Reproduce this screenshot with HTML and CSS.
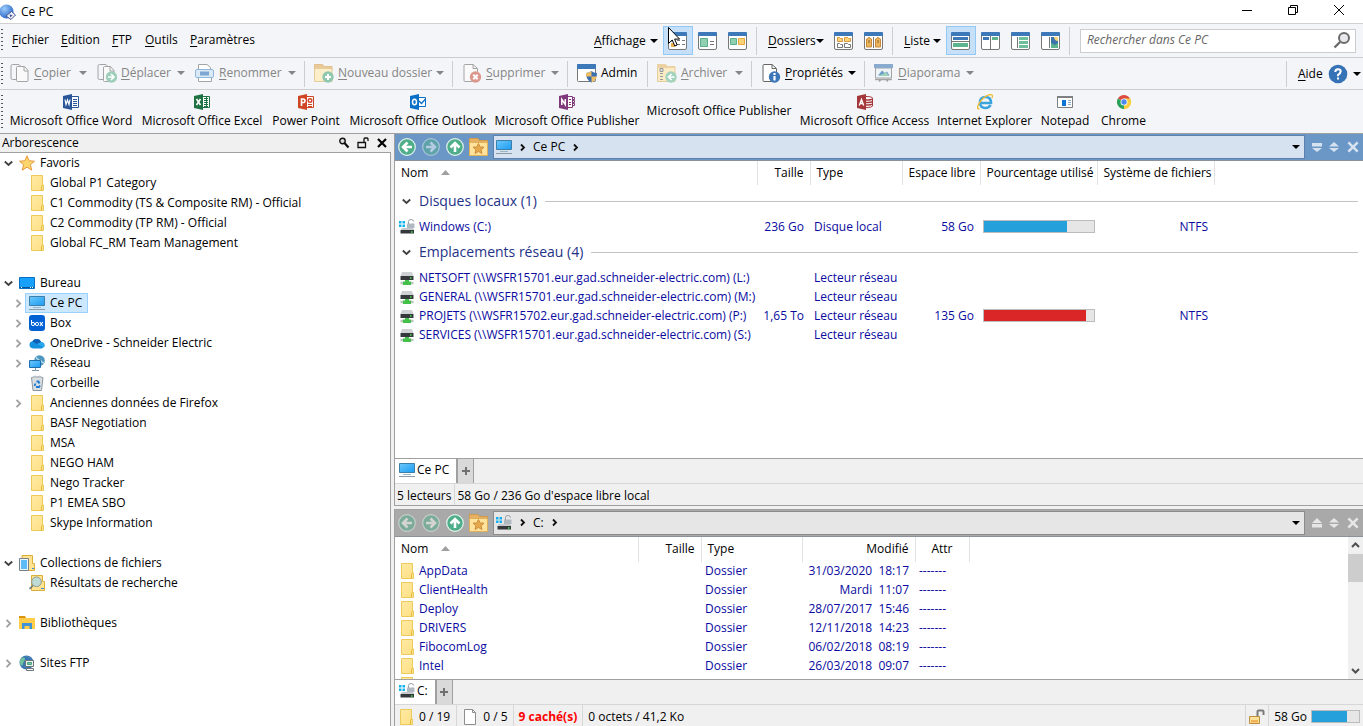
FILE: index.html
```html
<!DOCTYPE html>
<html lang="fr">

<head>
  <meta charset="UTF-8">
  <meta name="viewport" content="width=device-width, initial-scale=1.0">
  <link rel="stylesheet" href="styles.css">
  <title>Ce PC</title>
</head>

<body>
  <svg class="sprite" aria-hidden="true">
    <defs>
      <linearGradient id="g-folder" x1="0" y1="0" x2="1" y2="1"><stop offset="0" stop-color="#ffeaa5"/><stop offset="1" stop-color="#ffdf82"/></linearGradient>
      <linearGradient id="g-screen" x1="0" y1="0" x2="1" y2="1"><stop offset="0" stop-color="#6cc8fb"/><stop offset="1" stop-color="#1c9cf2"/></linearGradient>
      <radialGradient id="g-ball" cx=".35" cy=".3" r=".8"><stop offset="0" stop-color="#9ccbfa"/><stop offset="1" stop-color="#1f5fc4"/></radialGradient>
    </defs>

    <!-- 16px icons -->
    <symbol id="app" viewBox="0 0 16 16"><circle cx="6.500" cy="7.500" r="7" fill="url(#g-ball)"/><path d="M11.500 7.500L15.500 11l-4.500 4.500L6 12z" fill="#eef0fa" stroke="#44548f"/><path d="M9.500 10.500l3 .5-2 2.500z" fill="#3b4c8c"/></symbol>
    <symbol id="folder" viewBox="0 0 16 16"><path d="M2.500.5h11v9.500h1v5.500h-12z" fill="url(#g-folder)" stroke="#eccb5c"/><path d="M12.500 15.500v-4l1-1.500" fill="none" stroke="#e3b93c"/></symbol>
    <symbol id="star" viewBox="0 0 16 16"><path d="M8 .8l2.200 5 5.300.4-4.100 3.500 1.400 5.500L8 12.200l-4.800 3 1.400-5.500L.5 6.200l5.300-.4z" fill="#fdd56f" stroke="#e59a3e"/></symbol>
    <symbol id="desktop" viewBox="0 0 16 16"><path d="M.5 2.500h15v11H.5z" fill="#18a0fb" stroke="#0a6fc2"/><path d="M1 12.500h14" stroke="#08539a"/><path d="M2 12.500h1m8 0h1m1 0h1" stroke="#fff"/></symbol>
    <symbol id="pc" viewBox="0 0 16 16"><path d="M.5 1.500h15v9H.5z" fill="url(#g-screen)" stroke="#3c7fa9"/><path d="M4 12.500h8" stroke="#9bb4c2"/><path d="M0 14.500h16" stroke="#8b9aa3"/></symbol>
    <symbol id="box" viewBox="0 0 16 16"><rect width="16" height="16" rx="3" fill="#0061d5"/><path d="M2.500 5v4.500" stroke="#fff" fill="none"/><circle cx="4" cy="9" r="1.600" fill="none" stroke="#fff"/><circle cx="8" cy="9" r="1.600" fill="none" stroke="#fff"/><path d="M10.800 7l3 4m0-4l-3 4" stroke="#fff" stroke-width="1.200"/></symbol>
    <symbol id="cloud" viewBox="0 0 16 16"><path d="M4 13.500a3.700 3.700 0 0 1-.6-7.300 5 5 0 0 1 8.800.7 3.400 3.400 0 0 1 .6 6.600z" fill="#1490df"/><path d="M3.400 6.200a5 5 0 0 1 8.800.7L8 9z" fill="#0f5fb5"/><path d="M12.200 6.900a3.400 3.400 0 0 1 2.800 5.500L8 9z" fill="#28a8ea"/></symbol>
    <symbol id="network" viewBox="0 0 16 16"><circle cx="10.500" cy="5.500" r="5.300" fill="#4d96bd"/><path d="M7 2.500c2 .8 1.500 3 4 3s1 3 4 2" stroke="#b7dcea" fill="none" stroke-width="1.500"/><path d="M.5 5.500h11v7H.5z" fill="url(#g-screen)" stroke="#1f6fae"/><path d="M3 15.500h7M6.500 13v2" stroke="#7c99aa"/></symbol>
    <symbol id="bin" viewBox="0 0 16 16"><path d="M2.500 2.500h11.500l-1.500 13H4z" fill="#d9dee2" stroke="#8d979e"/><path d="M3 2.500l3-1.500 2 1 3-1 2 1.500" fill="#f7f8f9" stroke="#aab3b9"/><path d="M5.500 11l1-2.500M7.500 6.500h2l1 2M11 10.500l-1 1.500H7" stroke="#1c7ad2" stroke-width="1.800" fill="none"/></symbol>
    <symbol id="collection" viewBox="0 0 16 16"><path d="M3 .5h10.500v8h2v7H3z" fill="#ffe391" stroke="#dcae3c"/><path d="M.5 3.500h9v12h-9z" fill="#eef7fd" stroke="#75818a"/><path d="M2 5h6v9H2z" fill="#5fbbf5"/><path d="M13 13.500h2" stroke="#3a8bd8"/></symbol>
    <symbol id="results" viewBox="0 0 16 16"><path d="M2.500.5h11v6h2v9h-13z" fill="#ffe391" stroke="#dcae3c"/><circle cx="7.500" cy="6.800" r="4.800" fill="#bfdbd6" stroke="#8b9a96"/><path d="M4 10.500L.5 14" stroke="#6f7a80" stroke-width="1.600"/><path d="M12 13.500h3" stroke="#3a8bd8"/></symbol>
    <symbol id="library" viewBox="0 0 16 16"><path d="M0 1h6l1 2H0z" fill="#d9930d"/><path d="M0 3h16v11H0z" fill="#ffcd4a"/><path d="M3 14V8h10v6h-2.500v-3h-5v3z" fill="#3d93d8"/></symbol>
    <symbol id="ftp" viewBox="0 0 16 16"><circle cx="7.500" cy="7.500" r="7" fill="#3a77b5"/><path d="M1 5c2-3 5-3 5-1S4 7 4 9s-1 2-3 0M7 1c1 2 4 0 4 2" fill="#6fc09b"/><path d="M6.500 5.500h8v6h-8z" fill="#e8f3ee" stroke="#6e7477"/><path d="M8.500 7.500h4v2h-4z" fill="#7bc8a4" stroke="#4ea37e"/><path d="M7.500 13.500h7v2h-7z" fill="#fff" stroke="#6e7477"/></symbol>
    <symbol id="drive" viewBox="0 0 16 16"><path d="M0 2h2.500v2.500H0zM3.500 2H6v2.500H3.500zM0 5.500h2.500V8H0zM3.500 5.500H6V8H3.500z" fill="#13b1f0"/><path d="M3 9h11l1.500 2H1.500z" fill="#c6c9cb"/><path d="M1.500 11h13.500v3.500H1.500z" fill="#35393b"/><path d="M12 13h1.500" stroke="#47e04e" stroke-width="1.500"/><path d="M8 4.500h7.500V9H8z" fill="#b0b8c0"/><path d="M9.500 5V2.500q0-2 2.500-2t2.500 2" stroke="#98a1a9" fill="none"/></symbol>
    <symbol id="netdrive" viewBox="0 0 16 16"><path d="M3 2h10l1.500 4h-13z" fill="#cfd2d4"/><path d="M1.500 6h13v4h-13z" fill="#35393b"/><path d="M11 8h1.500" stroke="#47e04e" stroke-width="1.500"/><path d="M6 10h4v1.500h2V15H4v-3.500h2z" fill="#43c04a"/><path d="M1.500 13h2.500m8 0h2.500" stroke="#b9c4ba" stroke-width="2.500"/></symbol>
    <symbol id="doc" viewBox="0 0 16 16"><path d="M2.500.5h8l3 3v12h-11z" fill="#fff" stroke="#8e8e8e"/><path d="M10.500.5v3h3" fill="none" stroke="#8e8e8e"/></symbol>
    <symbol id="unlock" viewBox="0 0 16 16"><path d="M.5 7.500h10v7H.5z" fill="#ffe19a" stroke="#bf8e3e"/><path d="M2 11h7v2.500H2z" fill="#f0b254"/><path d="M8.500 7V2.500q0-1 1-1h4q1 0 1 1V6" fill="none" stroke="#7b7b7b" stroke-width="2"/></symbol>
    <symbol id="chev-down" viewBox="0 0 9 9"><path d="M.8 2.500L4.500 6l3.700-3.500" fill="none" stroke="#404040" stroke-width="1.800"/></symbol>
    <symbol id="chev-right" viewBox="0 0 9 9"><path d="M2.500.8L6.200 4.500 2.500 8.200" fill="none" stroke="#a0a0a0" stroke-width="1.800"/></symbol>
    <symbol id="crumb" viewBox="0 0 9 9"><path d="M3 1.500l3 3-3 3" fill="none" stroke="#111" stroke-width="1.800"/></symbol>
    <symbol id="caret" viewBox="0 0 8 4"><path d="M0 0h8L4 4z" fill="currentColor"/></symbol>
    <symbol id="sort" viewBox="0 0 9 5"><path d="M0 5h9L4.500 0z" fill="#a0a0a0"/></symbol>
    <symbol id="find" viewBox="0 0 12 12"><circle cx="4.500" cy="4" r="2.700" fill="#ddd" stroke="#111" stroke-width="1.400"/><path d="M6.500 6l4 4.500" stroke="#111" stroke-width="2.200"/></symbol>
    <symbol id="lock" viewBox="0 0 12 12"><path d="M1 5.500h7.500v5H1z" fill="none" stroke="#111" stroke-width="1.300"/><path d="M7 5V2q0-1 1-1h2q1 0 1 1v2" fill="none" stroke="#111" stroke-width="1.300"/></symbol>
    <symbol id="cross" viewBox="0 0 12 12"><path d="M2 2l8 8M10 2l-8 8" stroke="currentColor" stroke-width="2.200"/></symbol>

    <!-- 20px toolbar icons -->
    <symbol id="copy" viewBox="0 0 20 20"><path d="M6.500 16.500h-4q-1.500 0-1.500-1.500V3q0-1.500 1.500-1.500H9L11.500 4" fill="#f4f5f8" stroke="#a4a4a4"/><path d="M7.500 3.500h7l3.500 4v10q0 1-1 1H7.500q-1 0-1-1v-13q0-1 1-1z" fill="#fafafa" stroke="#a4a4a4"/><path d="M14 3.500V8h4" fill="none" stroke="#a4a4a4"/></symbol>
    <symbol id="move" viewBox="0 0 20 20"><path d="M6.500 16.500h-4Q1 16.500 1 15V3q0-1.500 1.500-1.500H9L11.500 4" fill="#f4f5f8" stroke="#a4a4a4"/><path d="M7.500 3.500h6l3.500 4v11H7.500q-1 0-1-1v-13q0-1 1-1z" fill="#fafafa" stroke="#a4a4a4"/><path d="M13 3.500V8h4" fill="none" stroke="#a4a4a4"/><circle cx="14.500" cy="14" r="5.700" fill="#9dceb9"/><path d="M11 14h6m-3-3l3 3-3 3" fill="none" stroke="#fff" stroke-width="1.700"/></symbol>
    <symbol id="rename" viewBox="0 0 20 20"><path d="M3.500 7V1.500H12L15.500 4.500V7" fill="#fff" stroke="#a4a4a4"/><path d="M3.500 13v5.500h13V13" fill="#fff" stroke="#a4a4a4"/><rect x=".5" y="6.500" width="18" height="8" rx="1.500" fill="#dbe9f5" stroke="#8db7de"/><path d="M5 8.500h9v4H5z" fill="#7ea6d0"/></symbol>
    <symbol id="newfolder" viewBox="0 0 20 20"><path d="M.5 1.500h8l1.500 2h8v4H.5z" fill="#ecc999" stroke="#dfc08f"/><path d="M.5 5.500h17.500v13H.5z" fill="#fbeec9" stroke="#e5cd9b"/><circle cx="14" cy="14" r="5.700" fill="#8fc8ae"/><path d="M11 14h6M14 11v6" stroke="#fff" stroke-width="2"/></symbol>
    <symbol id="delete" viewBox="0 0 20 20"><path d="M3 1.500h8l4.500 4v13H3q-1 0-1-1v-15q0-1 1-1z" fill="#fafafa" stroke="#a4a4a4"/><path d="M11 1.500v4h4" fill="none" stroke="#a4a4a4"/><circle cx="13.500" cy="14" r="5.700" fill="#dc978c"/><path d="M11.300 11.800l4.400 4.400m0-4.400l-4.400 4.400" stroke="#fff" stroke-width="2"/></symbol>
    <symbol id="admin" viewBox="0 0 20 20"><path d="M.5 1.500h18v16q0 1-1 1h-16q-1 0-1-1z" fill="#fff" stroke="#777"/><path d="M0 2q0-1 1-1h17q1 0 1 1v4H0z" fill="#3d78b8"/><path d="M9 10q3 0 5.500-2 2 2 5.500 2 0 7-5.500 9.500Q9 17 9 10z" fill="#3a6fb0"/><path d="M14.500 8v5.500H9.200L9 10q3 0 5.500-2zM14.500 13.500h5.200q-.9 4-5.200 6z" fill="#efbe63"/></symbol>
    <symbol id="archive" viewBox="0 0 20 20"><path d="M.5 1.500h8l1.500 2h8v15H.5z" fill="#fbecc6" stroke="#e5cd9b"/><path d="M0 2q0-1 1-1h7l1.500 2H18v2H0z" fill="#ecd2a2"/><path d="M3 5.500h3v3H3zM3 10.500h3m-3 3h3m-3 3h3" fill="#ddd" stroke="#9a9a9a"/><circle cx="14" cy="14" r="5.700" fill="#a3d3bc"/><path d="M17.500 14h-6m3-3l-3 3 3 3" fill="none" stroke="#fff" stroke-width="1.700"/></symbol>
    <symbol id="props" viewBox="0 0 20 20"><path d="M3 1.500h8l4.500 4v13H3q-1 0-1-1v-15q0-1 1-1z" fill="#fff" stroke="#666"/><path d="M11 1.500v4h4" fill="none" stroke="#666"/><circle cx="13.500" cy="14" r="5.700" fill="#3a76b8"/><path d="M13.500 10v2m0 1v4.500" stroke="#fff" stroke-width="2.200"/></symbol>
    <symbol id="slides" viewBox="0 0 20 20"><path d="M1.500 5h16v10h-16z" fill="#eef3f7" stroke="#a4a4a4"/><path d="M0 1h19v4H0z" fill="#8aabd0"/><path d="M4 12.500l4-5 3 2.500 2-1.500 2.500 4z" fill="#6e9ecb"/><path d="M4 13h11l-3-4-3 2z" fill="#9fd0ba"/><path d="M1 16.500h17M5 18.500l2-2m7 2l-2-2" stroke="#a4a4a4" stroke-width="1.500"/></symbol>
    <symbol id="help" viewBox="0 0 20 20"><circle cx="10" cy="10" r="9.300" fill="#3672b6"/><path d="M7.300 8q0-2.700 2.700-2.700t2.700 2.300Q12.700 9 10 11v1.300m0 1.200v2" fill="none" stroke="#fff" stroke-width="2"/></symbol>
    <symbol id="window" viewBox="0 0 20 20"><rect x=".5" y="1.500" width="18" height="17" rx="1.500" fill="#fff" stroke="#777"/><path d="M0 5V2q0-1 1-1h17q1 0 1 1v3z" fill="#3d78b8"/></symbol>
    <symbol id="v-details" viewBox="0 0 20 20"><use href="#window"/><path d="M3 7h4v4H3z" fill="#8fd0b0"/><path d="M3 12h4v4H3z" fill="#eeb04c"/><path d="M9 9.500h3m2 0h3m-8 4h3m2 0h3" stroke="#777"/></symbol>
    <symbol id="v-tiles" viewBox="0 0 20 20"><use href="#window"/><path d="M2.500 7.500h7v8h-7z" fill="#8fd0b0" stroke="#5cae8b"/><path d="M12 10.500h4m-4 3h4" stroke="#777"/></symbol>
    <symbol id="v-thumbs" viewBox="0 0 20 20"><use href="#window"/><path d="M2.500 7.500h6v6h-6z" fill="#8fd0b0" stroke="#5cae8b"/><path d="M10.500 7.500h6v6h-6z" fill="#fbd277" stroke="#e8a83c"/></symbol>
    <symbol id="v-folders" viewBox="0 0 20 20"><use href="#window"/><path d="M3.500 6.500h2l1 1h2v3h-5zM10.500 6.500h3l1 1h2v3h-6z" fill="#fbd277" stroke="#d9983e"/><path d="M3.500 12.500h2l1 1h2v3h-5zM10.500 12.500h3l1 1h2v3h-6z" fill="#fff" stroke="#777"/></symbol>
    <symbol id="v-dual" viewBox="0 0 20 20"><use href="#window"/><path d="M2.500 16V8L5 6.500 7.500 8v8zM11.500 16V8L14 6.500 16.500 8v8z" fill="#e9b45c" stroke="#c88a3a"/><path d="M9.500 6v11" stroke="#777"/><path d="M5 9v3m9-3v3" stroke="#8a6431"/></symbol>
    <symbol id="v-list" viewBox="0 0 20 20"><use href="#window"/><path d="M2 6h15v3H2z" fill="#3d78b8"/><path d="M1 10.500h17" stroke="#777"/><path d="M2 12h15v4H2z" fill="#5cb48f"/></symbol>
    <symbol id="v-cols" viewBox="0 0 20 20"><use href="#window"/><path d="M2 6h6v3H2z" fill="#3d78b8"/><path d="M11 6h6v3h-6z" fill="#5cb48f"/><path d="M9.500 5v13" stroke="#777"/></symbol>
    <symbol id="v-tree" viewBox="0 0 20 20"><use href="#window"/><path d="M6.500 6v11" stroke="#777"/><path d="M8 7.500h9m-9 4h9m-9 4h9" stroke="#6cbf9a" stroke-width="3"/></symbol>
    <symbol id="v-view" viewBox="0 0 20 20"><use href="#window"/><path d="M8.500 6v11" stroke="#777"/><path d="M10 6h7v11h-7z" fill="#3f74aa"/><path d="M10 17v-5l4 2 3-2v5z" fill="#5cb48f"/><path d="M13 6h4v4q-3.500 0-4-4z" fill="#f9d67e"/></symbol>
    <symbol id="search" viewBox="0 0 18 18"><circle cx="11" cy="7" r="5" fill="#e6e8ee" stroke="#6b6b6b" stroke-width="2"/><path d="M7 11l-5.500 5.500" stroke="#6b6b6b" stroke-width="2.400"/></symbol>

    <!-- location bar -->
    <symbol id="back" viewBox="0 0 20 20"><circle cx="10" cy="10" r="8.300" fill="#4fae8a" stroke="#e4f3ec" stroke-width="1.200"/><path d="M15 10H6m4.500-4.500L6 10l4.500 4.500" fill="none" stroke="#fff" stroke-width="2.600"/></symbol>
    <symbol id="forward" viewBox="0 0 20 20"><circle cx="10" cy="10" r="8.300" fill="#4fae8a" stroke="#e4f3ec" stroke-width="1.200"/><path d="M5 10h9M9.500 5.500L14 10l-4.500 4.500" fill="none" stroke="#fff" stroke-width="2.600"/></symbol>
    <symbol id="up" viewBox="0 0 20 20"><circle cx="10" cy="10" r="8.300" fill="#4fae8a" stroke="#e4f3ec" stroke-width="1.200"/><path d="M10 15V6M5.500 10.500L10 6l4.500 4.500" fill="none" stroke="#fff" stroke-width="2.600"/></symbol>
    <symbol id="favfolder" viewBox="0 0 20 20"><path d="M.5 1.500H9l1.500 2h8V8H.5z" fill="#e7b163" stroke="#d09a4c"/><path d="M.5 5.500h18v13H.5z" fill="#ffe29c" stroke="#e0b058"/><path d="M9.500 6.500l1.600 3.400 3.900.3-3 2.500 1 3.800-3.500-2-3.500 2 1-3.800-3-2.500 3.900-.3z" fill="#e6a94e" stroke="#cd8f3a"/></symbol>
    <symbol id="half-down" viewBox="0 0 10 10"><path d="M0 1h10v3.500H0zM0 6h10L5 10z" fill="currentColor"/></symbol>
    <symbol id="half-up" viewBox="0 0 10 10"><path d="M0 5h10L5 0zM0 6h10v3.500H0z" fill="currentColor"/></symbol>
    <symbol id="half-both" viewBox="0 0 10 10"><path d="M0 4.500h10L5 0zM0 6h10L5 10z" fill="currentColor"/></symbol>

    <!-- launcher icons -->
    <symbol id="word" viewBox="0 0 16 16"><path d="M8.500 2.500h7v11h-7z" fill="#fff" stroke="#2a5699"/><path d="M10 5.500h4m-4 2h4m-4 2h4m-4 2h4" stroke="#2a5699"/><path d="M0 2l9-2v16l-9-2z" fill="#2a5699"/><path d="M2 5.500l1 5 1.500-4.500L6 10.500l1-5" fill="none" stroke="#fff" stroke-width="1.200"/></symbol>
    <symbol id="excel" viewBox="0 0 16 16"><path d="M8.500 2.500h7v11h-7z" fill="#fff" stroke="#1f7244"/><path d="M10 4.500h4m-4 2h4m-4 2h4m-4 2h4m-4 2h4M12.500 3v10" stroke="#1f7244"/><path d="M0 2l9-2v16l-9-2z" fill="#1f7244"/><path d="M2.500 5l4 6m0-6l-4 6" fill="none" stroke="#fff" stroke-width="1.600"/></symbol>
    <symbol id="ppt" viewBox="0 0 16 16"><path d="M8.500 2.500h7v11h-7z" fill="#fff" stroke="#d04526"/><path d="M10 10.500h4m-4 2h4" stroke="#d04526"/><circle cx="12" cy="6.500" r="1.800" fill="none" stroke="#d04526" stroke-width="1.400"/><path d="M0 2l9-2v16l-9-2z" fill="#d04526"/><path d="M3.500 12V5H5q2 0 2 1.800T5 8.500H3.500" fill="none" stroke="#fff" stroke-width="1.600"/></symbol>
    <symbol id="outlook" viewBox="0 0 16 16"><path d="M8.500 3.500h7v9h-7z" fill="#fff" stroke="#0a6fc7"/><path d="M9 7l2.500 2.500L15.500 5" fill="none" stroke="#0a6fc7" stroke-width="1.300"/><path d="M0 2l9-2v16l-9-2z" fill="#0a6fc7"/><ellipse cx="4.500" cy="8" rx="2" ry="2.800" fill="none" stroke="#fff" stroke-width="1.500"/></symbol>
    <symbol id="onenote" viewBox="0 0 16 16"><path d="M8.500 2.500h5v11h-5z" fill="#fff" stroke="#80397b"/><path d="M14 3.500h1.500v2H14m0 1h1.500v2H14m0 1h1.500v2H14M10 5.500h2m-2 3h2m-2 2h2" stroke="#80397b" fill="none"/><path d="M0 2l9-2v16l-9-2z" fill="#80397b"/><path d="M2.800 11V5.500l3.500 5V5" fill="none" stroke="#fff" stroke-width="1.500"/></symbol>
    <symbol id="access" viewBox="0 0 16 16"><path d="M8 2.500q7 0 7.500 1.500v8q-.5 1.500-7.500 1.500z" fill="#fff" stroke="#a4373a"/><path d="M9 6q5.500 0 6.500-1M9 8.500q5.500 0 6.500-1M9 11q5.500 0 6.500-1" fill="none" stroke="#a4373a" stroke-width="1.400"/><path d="M0 2l9-2v16l-9-2z" fill="#a4373a"/><path d="M2.300 11.500l2.200-6 2.200 6m-3.500-2h2.600" fill="none" stroke="#fff" stroke-width="1.400"/></symbol>
    <symbol id="ie" viewBox="0 0 16 16"><path d="M3 9h11q0-6-5.500-6T3 8.500t5.500 5.500q3.500 0 5-3" fill="none" stroke="#3ba4dc" stroke-width="2.600"/><path d="M2.500 15Q-1 15 2 9.500 6 2.500 12 .8q4.500-1 3 3.200" fill="none" stroke="#f2be35" stroke-width="1.400"/></symbol>
    <symbol id="notepad" viewBox="0 0 16 16"><path d="M.5 2.500h15v11H.5z" fill="#fff" stroke="#7d7f82"/><path d="M0 3h16" stroke="#7d7f82" stroke-width="2"/><path d="M5 6h4v6H5z" fill="#0c74d4"/><path d="M11 6.500h3m-3 2h3m-3 2h3" stroke="#8ba8c4"/></symbol>
    <symbol id="chrome" viewBox="0 0 16 16"><path d="M8 8L1.900 4.500A7 7 0 0 1 14 4.500z" fill="#dd4b3e"/><path d="M8 8l6-3.500A7 7 0 0 1 8 15z" fill="#fbce42"/><path d="M8 8v7A7 7 0 0 1 1.900 4.500z" fill="#2aa15a"/><path d="M8 4.500h6.200A7 7 0 0 1 8 15l3-5z" fill="#fbce42"/><circle cx="8" cy="8" r="3.500" fill="#fff"/><circle cx="8" cy="8" r="2.700" fill="#4a8bf0"/></symbol>
  </svg>

  <header class="titlebar">
    <svg class="i16"><use href="#app"/></svg>
    <h1>Ce PC</h1>
    <div class="winbtns">
      <button aria-label="Réduire"><svg class="i12" viewBox="0 0 12 12"><path d="M1 6.500h10" stroke="#000"/></svg></button>
      <button aria-label="Restaurer"><svg class="i12" viewBox="0 0 12 12"><path d="M1.500 3.500h7v7h-7zM3.500 3V1.500h7v7H9" fill="none" stroke="#000"/></svg></button>
      <button aria-label="Fermer"><svg class="i12" viewBox="0 0 12 12"><path d="M1 1l10 10M11 1L1 11" stroke="#000"/></svg></button>
    </div>
  </header>

  <nav class="bar menubar">
    <span class="grip"></span>
    <div class="menus">
      <button><u>F</u>ichier</button>
      <button><u>E</u>dition</button>
      <button><u>F</u>TP</button>
      <button><u>O</u>utils</button>
      <button><u>P</u>aramètres</button>
    </div>
    <div class="views views-display">
      <button class="drop"><span><u>A</u>ffichage</span><svg class="caret"><use href="#caret"/></svg></button>
      <button class="view on" aria-label="Détails"><svg class="i20"><use href="#v-details"/></svg>
        <svg class="pointer" viewBox="0 0 12 20"><path d="M.5.500v16l3.700-3.500 2.600 6 2.400-1-2.600-5.900h5z" fill="#fff" stroke="#000"/></svg>
      </button>
      <button class="view" aria-label="Mosaïques"><svg class="i20"><use href="#v-tiles"/></svg></button>
      <button class="view" aria-label="Vignettes"><svg class="i20"><use href="#v-thumbs"/></svg></button>
    </div>
    <div class="views views-folders">
      <button class="drop"><span><u>D</u>ossiers</span><svg class="caret"><use href="#caret"/></svg></button>
      <button class="view" aria-label="Dossiers"><svg class="i20"><use href="#v-folders"/></svg></button>
      <button class="view" aria-label="Formats"><svg class="i20"><use href="#v-dual"/></svg></button>
    </div>
    <div class="views views-list">
      <button class="drop"><span><u>L</u>iste</span><svg class="caret"><use href="#caret"/></svg></button>
      <button class="view on" aria-label="Horizontal"><svg class="i20"><use href="#v-list"/></svg></button>
      <button class="view" aria-label="Vertical"><svg class="i20"><use href="#v-cols"/></svg></button>
      <button class="view" aria-label="Arborescence"><svg class="i20"><use href="#v-tree"/></svg></button>
      <button class="view" aria-label="Visionneuse"><svg class="i20"><use href="#v-view"/></svg></button>
    </div>
    <form class="search">
      <input type="text" aria-label="Rechercher" placeholder="Rechercher dans Ce PC">
      <svg class="i18"><use href="#search"/></svg>
    </form>
  </nav>

  <nav class="bar toolbar">
    <span class="grip"></span>
    <div class="tools first">
      <button class="tool t-copy" disabled><svg class="i20"><use href="#copy"/></svg><span><u>C</u>opier</span><svg class="caret"><use href="#caret"/></svg></button>
      <button class="tool t-move" disabled><svg class="i20"><use href="#move"/></svg><span><u>D</u>éplacer</span><svg class="caret"><use href="#caret"/></svg></button>
      <button class="tool t-rename" disabled><svg class="i20"><use href="#rename"/></svg><span><u>R</u>enommer</span><svg class="caret"><use href="#caret"/></svg></button>
    </div>
    <div class="tools"><button class="tool t-new" disabled><svg class="i20"><use href="#newfolder"/></svg><span><u>N</u>ouveau dossier</span><svg class="caret"><use href="#caret"/></svg></button></div>
    <div class="tools"><button class="tool t-delete" disabled><svg class="i20"><use href="#delete"/></svg><span><u>S</u>upprimer</span><svg class="caret"><use href="#caret"/></svg></button></div>
    <div class="tools"><button class="tool t-admin"><svg class="i20"><use href="#admin"/></svg><span>Admin</span></button></div>
    <div class="tools"><button class="tool t-archive" disabled><svg class="i20"><use href="#archive"/></svg><span><u>A</u>rchiver</span><svg class="caret"><use href="#caret"/></svg></button></div>
    <div class="tools"><button class="tool t-props"><svg class="i20"><use href="#props"/></svg><span><u>P</u>ropriétés</span><svg class="caret"><use href="#caret"/></svg></button></div>
    <div class="tools last"><button class="tool t-slides" disabled><svg class="i20"><use href="#slides"/></svg><span><u>D</u>iaporama</span><svg class="caret"><use href="#caret"/></svg></button></div>
    <button class="aide"><span><u>A</u>ide</span><svg class="i20"><use href="#help"/></svg><svg class="caret"><use href="#caret"/></svg></button>
  </nav>

  <nav class="bar launcher">
    <span class="grip"></span>
    <div class="apps">
      <button><svg class="i16"><use href="#word"/></svg>Microsoft Office Word</button>
      <button><svg class="i16"><use href="#excel"/></svg>Microsoft Office Excel</button>
      <button><svg class="i16"><use href="#ppt"/></svg>Power Point</button>
      <button><svg class="i16"><use href="#outlook"/></svg>Microsoft Office Outlook</button>
      <button><svg class="i16"><use href="#onenote"/></svg>Microsoft Office Publisher</button>
      <button>Microsoft Office Publisher</button>
      <button><svg class="i16"><use href="#access"/></svg>Microsoft Office Access</button>
      <button><svg class="i16"><use href="#ie"/></svg>Internet Explorer</button>
      <button><svg class="i16"><use href="#notepad"/></svg>Notepad</button>
      <button><svg class="i16"><use href="#chrome"/></svg>Chrome</button>
    </div>
  </nav>

  <main>
    <aside class="sidebar">
      <div class="side-head">
        <h2>Arborescence</h2>
        <button aria-label="Chercher"><svg class="i12"><use href="#find"/></svg></button>
        <button aria-label="Verrouiller"><svg class="i12"><use href="#lock"/></svg></button>
        <button aria-label="Fermer"><svg class="i12"><use href="#cross"/></svg></button>
      </div>
      <ul class="tree">
        <li>
          <div class="node"><svg class="chev"><use href="#chev-down"/></svg><span class="item"><svg class="i16"><use href="#star"/></svg>Favoris</span></div>
          <ul>
            <li class="node"><span class="chev"></span><span class="item"><svg class="i16"><use href="#folder"/></svg>Global P1 Category</span></li>
            <li class="node"><span class="chev"></span><span class="item"><svg class="i16"><use href="#folder"/></svg>C1 Commodity (TS &amp; Composite RM) - Official</span></li>
            <li class="node"><span class="chev"></span><span class="item"><svg class="i16"><use href="#folder"/></svg>C2 Commodity (TP RM) - Official</span></li>
            <li class="node"><span class="chev"></span><span class="item"><svg class="i16"><use href="#folder"/></svg>Global FC_RM Team Management</span></li>
          </ul>
        </li>
        <li>
          <div class="node"><svg class="chev"><use href="#chev-down"/></svg><span class="item"><svg class="i16"><use href="#desktop"/></svg>Bureau</span></div>
          <ul>
            <li class="node"><svg class="chev"><use href="#chev-right"/></svg><span class="item selected"><svg class="i16"><use href="#pc"/></svg>Ce PC</span></li>
            <li class="node"><svg class="chev"><use href="#chev-right"/></svg><span class="item"><svg class="i16"><use href="#box"/></svg>Box</span></li>
            <li class="node"><svg class="chev"><use href="#chev-right"/></svg><span class="item"><svg class="i16"><use href="#cloud"/></svg>OneDrive - Schneider Electric</span></li>
            <li class="node"><svg class="chev"><use href="#chev-right"/></svg><span class="item"><svg class="i16"><use href="#network"/></svg>Réseau</span></li>
            <li class="node"><span class="chev"></span><span class="item"><svg class="i16"><use href="#bin"/></svg>Corbeille</span></li>
            <li class="node"><svg class="chev"><use href="#chev-right"/></svg><span class="item"><svg class="i16"><use href="#folder"/></svg>Anciennes données de Firefox</span></li>
            <li class="node"><span class="chev"></span><span class="item"><svg class="i16"><use href="#folder"/></svg>BASF Negotiation</span></li>
            <li class="node"><span class="chev"></span><span class="item"><svg class="i16"><use href="#folder"/></svg>MSA</span></li>
            <li class="node"><span class="chev"></span><span class="item"><svg class="i16"><use href="#folder"/></svg>NEGO HAM</span></li>
            <li class="node"><span class="chev"></span><span class="item"><svg class="i16"><use href="#folder"/></svg>Nego Tracker</span></li>
            <li class="node"><span class="chev"></span><span class="item"><svg class="i16"><use href="#folder"/></svg>P1 EMEA SBO</span></li>
            <li class="node"><span class="chev"></span><span class="item"><svg class="i16"><use href="#folder"/></svg>Skype Information</span></li>
          </ul>
        </li>
        <li>
          <div class="node"><svg class="chev"><use href="#chev-down"/></svg><span class="item"><svg class="i16"><use href="#collection"/></svg>Collections de fichiers</span></div>
          <ul>
            <li class="node"><span class="chev"></span><span class="item"><svg class="i16"><use href="#results"/></svg>Résultats de recherche</span></li>
          </ul>
        </li>
        <li>
          <div class="node"><svg class="chev"><use href="#chev-right"/></svg><span class="item"><svg class="i16"><use href="#library"/></svg>Bibliothèques</span></div>
        </li>
        <li>
          <div class="node"><svg class="chev"><use href="#chev-right"/></svg><span class="item"><svg class="i16"><use href="#ftp"/></svg>Sites FTP</span></div>
        </li>
      </ul>
    </aside>

    <div class="panes">
      <section class="pane pane-top">
        <div class="location">
          <button aria-label="Précédent"><svg class="i20"><use href="#back"/></svg></button>
          <button aria-label="Suivant" disabled><svg class="i20"><use href="#forward"/></svg></button>
          <button aria-label="Parent"><svg class="i20"><use href="#up"/></svg></button>
          <button aria-label="Favoris"><svg class="i20"><use href="#favfolder"/></svg></button>
          <div class="path">
            <svg class="i16"><use href="#pc"/></svg>
            <svg class="crumb"><use href="#crumb"/></svg>
            <span>Ce PC</span>
            <svg class="crumb"><use href="#crumb"/></svg>
            <button class="path-drop" aria-label="Historique"><svg class="caret"><use href="#caret"/></svg></button>
          </div>
          <div class="pane-btns">
            <button aria-label="Agrandir"><svg class="i10"><use href="#half-down"/></svg></button>
            <button aria-label="Partager"><svg class="i10"><use href="#half-both"/></svg></button>
            <button aria-label="Fermer"><svg class="i14"><use href="#cross"/></svg></button>
          </div>
        </div>
        <div class="files">
          <table>
            <colgroup><col class="c-name"><col class="c-size"><col class="c-type"><col class="c-free"><col class="c-used"><col class="c-fs"><col></colgroup>
            <thead>
              <tr><th>Nom<svg class="sort"><use href="#sort"/></svg></th><th class="r">Taille</th><th>Type</th><th class="r">Espace libre</th><th>Pourcentage utilisé</th><th class="r">Système de fichiers</th><td></td></tr>
            </thead>
            <tbody>
              <tr class="group"><td colspan="7"><div class="group-line"><svg class="chev"><use href="#chev-down"/></svg><span>Disques locaux (1)</span></div></td></tr>
              <tr><td><span class="file"><svg class="i16"><use href="#drive"/></svg>Windows (C:)</span></td><td class="r">236 Go</td><td>Disque local</td><td class="r">58 Go</td><td class="used"><div class="usage"><div style="width: 75%"></div></div></td><td class="r">NTFS</td><td></td></tr>
              <tr class="group"><td colspan="7"><div class="group-line"><svg class="chev"><use href="#chev-down"/></svg><span>Emplacements réseau (4)</span></div></td></tr>
              <tr><td><span class="file"><svg class="i16"><use href="#netdrive"/></svg>NETSOFT (\\WSFR15701.eur.gad.schneider-electric.com) (L:)</span></td><td></td><td>Lecteur réseau</td><td></td><td></td><td></td><td></td></tr>
              <tr><td><span class="file"><svg class="i16"><use href="#netdrive"/></svg>GENERAL (\\WSFR15701.eur.gad.schneider-electric.com) (M:)</span></td><td></td><td>Lecteur réseau</td><td></td><td></td><td></td><td></td></tr>
              <tr><td><span class="file"><svg class="i16"><use href="#netdrive"/></svg>PROJETS (\\WSFR15702.eur.gad.schneider-electric.com) (P:)</span></td><td class="r">1,65 To</td><td>Lecteur réseau</td><td class="r">135 Go</td><td class="used"><div class="usage full"><div style="width: 93%"></div></div></td><td class="r">NTFS</td><td></td></tr>
              <tr><td><span class="file"><svg class="i16"><use href="#netdrive"/></svg>SERVICES (\\WSFR15701.eur.gad.schneider-electric.com) (S:)</span></td><td></td><td>Lecteur réseau</td><td></td><td></td><td></td><td></td></tr>
            </tbody>
          </table>
        </div>
        <div class="tabs">
          <button class="tab"><svg class="i16"><use href="#pc"/></svg>Ce PC</button>
          <button class="newtab" aria-label="Nouvel onglet"><svg class="i10" viewBox="0 0 10 10"><path d="M1 5h8M5 1v8" stroke="#707070" stroke-width="2"/></svg></button>
        </div>
        <footer class="status">
          <span class="cell">5 lecteurs</span>
          <span class="cell">58 Go / 236 Go d'espace libre local</span>
        </footer>
      </section>

      <section class="pane pane-bottom">
        <div class="location">
          <button aria-label="Précédent" disabled><svg class="i20"><use href="#back"/></svg></button>
          <button aria-label="Suivant" disabled><svg class="i20"><use href="#forward"/></svg></button>
          <button aria-label="Parent"><svg class="i20"><use href="#up"/></svg></button>
          <button aria-label="Favoris"><svg class="i20"><use href="#favfolder"/></svg></button>
          <div class="path">
            <svg class="i16"><use href="#drive"/></svg>
            <svg class="crumb"><use href="#crumb"/></svg>
            <span>C:</span>
            <svg class="crumb"><use href="#crumb"/></svg>
            <button class="path-drop" aria-label="Historique"><svg class="caret"><use href="#caret"/></svg></button>
          </div>
          <div class="pane-btns">
            <button aria-label="Agrandir"><svg class="i10"><use href="#half-up"/></svg></button>
            <button aria-label="Partager"><svg class="i10"><use href="#half-both"/></svg></button>
            <button aria-label="Fermer"><svg class="i14"><use href="#cross"/></svg></button>
          </div>
        </div>
        <div class="files">
          <table>
            <colgroup><col class="d-name"><col class="d-size"><col class="d-type"><col class="d-date"><col class="d-attr"><col></colgroup>
            <thead>
              <tr><th>Nom<svg class="sort"><use href="#sort"/></svg></th><th class="r">Taille</th><th>Type</th><th class="r">Modifié</th><th class="c">Attr</th><td></td></tr>
            </thead>
            <tbody>
              <tr><td><span class="file"><svg class="i16"><use href="#folder"/></svg>AppData</span></td><td></td><td>Dossier</td><td class="r">31/03/2020 &nbsp;18:17</td><td class="c">-------</td><td></td></tr>
              <tr><td><span class="file"><svg class="i16"><use href="#folder"/></svg>ClientHealth</span></td><td></td><td>Dossier</td><td class="r">Mardi &nbsp;11:07</td><td class="c">-------</td><td></td></tr>
              <tr><td><span class="file"><svg class="i16"><use href="#folder"/></svg>Deploy</span></td><td></td><td>Dossier</td><td class="r">28/07/2017 &nbsp;15:46</td><td class="c">-------</td><td></td></tr>
              <tr><td><span class="file"><svg class="i16"><use href="#folder"/></svg>DRIVERS</span></td><td></td><td>Dossier</td><td class="r">12/11/2018 &nbsp;14:23</td><td class="c">-------</td><td></td></tr>
              <tr><td><span class="file"><svg class="i16"><use href="#folder"/></svg>FibocomLog</span></td><td></td><td>Dossier</td><td class="r">06/02/2018 &nbsp;08:19</td><td class="c">-------</td><td></td></tr>
              <tr><td><span class="file"><svg class="i16"><use href="#folder"/></svg>Intel</span></td><td></td><td>Dossier</td><td class="r">26/03/2018 &nbsp;09:07</td><td class="c">-------</td><td></td></tr>
              <tr><td><span class="file"><svg class="i16"><use href="#folder"/></svg></span></td><td></td><td></td><td></td><td></td><td></td></tr>
            </tbody>
          </table>
          <div class="scrollbar">
            <svg viewBox="0 0 9 9"><path d="M1 6l3.500-3.500L8 6" fill="none" stroke="#505050" stroke-width="2"/></svg>
            <div class="thumb"></div>
            <svg viewBox="0 0 9 9"><path d="M1 3l3.500 3.500L8 3" fill="none" stroke="#505050" stroke-width="2"/></svg>
          </div>
        </div>
        <div class="tabs">
          <button class="tab"><svg class="i16"><use href="#drive"/></svg>C:</button>
          <button class="newtab" aria-label="Nouvel onglet"><svg class="i10" viewBox="0 0 10 10"><path d="M1 5h8M5 1v8" stroke="#707070" stroke-width="2"/></svg></button>
        </div>
        <footer class="status counts">
          <span class="cell"><svg class="i16"><use href="#folder"/></svg>0 / 19</span>
          <span class="cell"><svg class="i16"><use href="#doc"/></svg>0 / 5</span>
          <span class="cell hidden-files">9 caché(s)</span>
          <span class="cell">0 octets / 41,2 Ko</span>
          <span class="cell lock"><svg class="i16"><use href="#unlock"/></svg></span>
          <span class="cell disk">58 Go <span class="usage"><span style="width: 75%"></span></span></span>
        </footer>
      </section>
    </div>
  </main>
</body>

</html>
```
FILE: styles.css
```css
* {
  box-sizing: border-box;
}

body {
  display: flex;
  flex-direction: column;
  height: 100vh;
  margin: 0;
  overflow: hidden;
  background: #f0f0f0;
  color: #000;
  font: 12px/16px "Segoe UI", "Open Sans", "Noto Sans", sans-serif;
  white-space: nowrap;
}

button {
  display: flex;
  align-items: center;
  padding: 0;
  border: 0;
  background: none;
  color: inherit;
  font: inherit;
}

h1,
h2 {
  margin: 0;
  font: inherit;
}

u {
  text-underline-offset: 2px;
}

svg {
  display: block;
  flex: none;
}

.sprite {
  position: absolute;
  width: 0;
  height: 0;
}

.i10 { width: 10px; height: 10px; }
.i12 { width: 12px; height: 12px; }
.i14 { width: 14px; height: 14px; }
.i16 { width: 16px; height: 16px; }
.i18 { width: 18px; height: 18px; }
.i20 { width: 20px; height: 20px; }

.caret {
  width: 8px;
  height: 4px;
}

.chev,
.crumb {
  width: 9px;
  height: 9px;
}

/* title bar */

.titlebar {
  display: flex;
  align-items: center;
  height: 24px;
  gap: 5px;
  background: #fff;
  border-bottom: 1px solid #d0d0d0;
}

.winbtns {
  display: flex;
  gap: 34px;
  margin-left: auto;
  padding: 0 18px 3px 0;
}

/* bars */

.bar {
  display: flex;
  align-items: center;
  background: #f4f5f8;
  border-bottom: 1px solid #cdcdd0;
}

.grip {
  align-self: stretch;
  width: 2px;
  margin: 5px 7px 5px 1px;
  background: repeating-linear-gradient(#555 0 1px, transparent 1px 4px);
}

.menubar {
  height: 34px;
}

.menus {
  display: grid;
  grid-template-columns: 49px 51px 33px 45px auto;
  margin-right: auto;
  padding: 0 0 1px 2px;
}

.views {
  display: flex;
  align-items: center;
  height: 28px;
  padding: 0 3px 0 11px;
  border-right: 1px solid #cdcdd0;
}

.views-display { width: 174px; }
.views-folders { width: 136px; }
.views-list { width: 177px; }

.drop {
  flex: 1;
  justify-content: space-between;
  min-width: 0;
  margin-right: 5px;
}

.view {
  position: relative;
  justify-content: center;
  width: 30px;
  height: 29px;
  border: 1px solid transparent;
}

.view.on {
  background: #c5e0f8;
  border-color: #92c9f5;
}

.pointer {
  position: absolute;
  top: 0;
  left: 4px;
  width: 12px;
  height: 20px;
}

.search {
  display: flex;
  align-items: center;
  width: 276px;
  height: 24px;
  margin: 0 7px 0 10px;
  padding: 0 4px 1px 6px;
  background: #fff;
  border: 1px solid #cdcdd0;
}

.search input {
  flex: 1;
  min-width: 0;
  padding: 0;
  border: 0;
  outline: 0;
  background: none;
  font: italic 12px/16px "Segoe UI", "Open Sans", "Noto Sans", sans-serif;
}

.search input::placeholder {
  color: #666;
}

.toolbar {
  height: 32px;
}

.tools {
  display: flex;
  align-items: center;
  gap: 10px;
  height: 26px;
  padding: 0 8px 2px 9px;
  border-right: 1px solid #cdcdd0;
}

.tools.first {
  padding-left: 0;
}

.tools.last {
  border-right: 0;
}

.tool {
  gap: 4px;
}

.tool .caret {
  margin-left: auto;
}

.t-copy { width: 77px; }
.t-move { width: 88px; }
.t-rename { width: 101px; }
.t-new { width: 130px; }
.t-delete { width: 97px; }
.t-admin { width: 62px; }
.t-archive { width: 86px; }
.t-props { width: 95px; }
.t-slides { width: 100px; }

.tool:disabled {
  color: #858585;
}

.aide {
  gap: 5px;
  height: 26px;
  width: 77px;
  margin-left: auto;
  padding: 0 6px 0 11px;
  border-left: 1px solid #cdcdd0;
}

.aide span {
  flex: 1;
  text-align: left;
}

.launcher {
  height: 44px;
  border-bottom-color: #a0a0a0;
}

.apps {
  display: grid;
  grid-template-columns: 118px 116px 64px 132px 138px 138px 125px 87px 46px 43px;
  gap: 14px;
  padding: 0 0 1px 2px;
}

.apps button {
  flex-direction: column;
  justify-content: center;
  gap: 3px;
}

/* main */

main {
  display: flex;
  flex: 1;
  min-height: 0;
}

.sidebar {
  display: flex;
  flex-direction: column;
  width: 391px;
  margin-right: 3px;
}

.side-head {
  display: flex;
  align-items: center;
  gap: 7px;
  height: 18px;
  padding: 0 3px 0 2px;
}

.side-head h2 {
  margin-right: auto;
}

.tree {
  flex: 1;
  overflow: hidden;
  background: #fff;
  border: 1px solid #a0a0a0;
  border-width: 1px 1px 0 0;
}

.tree,
.tree ul {
  margin: 0;
  padding: 0;
  list-style: none;
}

.tree > li {
  padding-left: 4px;
  margin-bottom: 20px;
}

.tree ul {
  padding-left: 10px;
}

.node {
  display: flex;
  align-items: center;
  gap: 2px;
  height: 20px;
}

.item {
  display: flex;
  align-items: center;
  gap: 5px;
  height: 20px;
  padding: 0 5px 0 3px;
  border: 1px solid transparent;
}

.selected {
  background: #cce8ff;
  border-color: #99d1ff;
}

.panes {
  display: flex;
  flex: 1;
  flex-direction: column;
  gap: 3px;
  min-width: 0;
}

.pane {
  display: flex;
  flex-direction: column;
  min-height: 0;
  border-left: 1px solid #a0a0a0;
}

.pane-top {
  flex: 12 0 0;
  border-bottom: 1px solid #a0a0a0;
}

.pane-bottom {
  flex: 7 0 0;
  border-top: 1px solid #a0a0a0;
}

.location {
  display: flex;
  align-items: center;
  gap: 4px;
  flex: none;
  height: 27px;
  padding: 0 3px 0 2px;
  background: #6b97c7;
  border-bottom: 1px solid #8c9298;
}

.location > button:disabled {
  opacity: 0.5;
}

.path {
  display: flex;
  flex: 1;
  align-items: center;
  gap: 6px;
  height: 24px;
  padding: 0 4px 0 2px;
  background: #d6e2f0;
  border: 1px solid #5b81ac;
}

.path-drop {
  margin-left: auto;
}

.pane-btns {
  display: flex;
  align-items: center;
  gap: 7px;
  padding-left: 3px;
  color: #d6e2f0;
}

.pane-bottom .location {
  background: #a9a9a9;
}

.pane-bottom .path {
  background: #e6e6e6;
  border-color: #8c8c8c;
}

.pane-bottom .pane-btns {
  color: #e6e6e6;
}

.files {
  display: flex;
  flex: 1;
  min-height: 0;
  overflow: hidden;
  background: #fff;
  color: #0a0aa0;
}

table {
  flex: 1;
  align-self: flex-start;
  width: 100%;
  table-layout: fixed;
  border-collapse: collapse;
}

th {
  height: 24px;
  padding: 0 6px;
  border-right: 1px solid #e2e2e2;
  color: #000;
  font-weight: normal;
  text-align: left;
}

td {
  height: 19px;
  padding: 0 6px 0 4px;
}

.pane-bottom th {
  height: 25px;
}

.r { text-align: right; }
th.c { text-align: center; }

.c-name { width: 362px; }
.c-size { width: 53px; }
.c-type { width: 92px; }
.c-free { width: 78px; }
.c-used,
.c-fs { width: 117px; }

.d-name { width: 243px; }
.d-size { width: 63px; }
.d-type { width: 101px; }
.d-date { width: 113px; }
.d-attr { width: 54px; }

.sort {
  display: inline-block;
  width: 9px;
  height: 5px;
  margin-left: 13px;
  vertical-align: 2px;
}

.file {
  display: flex;
  align-items: center;
  gap: 4px;
  height: 19px;
}

.group td {
  height: 32px;
  padding: 0 5px 0 7px;
}

.group-line {
  display: flex;
  align-items: center;
  gap: 8px;
  color: #1e3287;
  font-size: 14px;
}

.group-line::after {
  content: "";
  flex: 1;
  border-top: 1px solid #c3c3c3;
}

td.used {
  padding: 0 2px 0 3px;
}

.usage {
  display: block;
  height: 13px;
  background: #e6e6e6;
  border: 1px solid #bcbcbc;
}

.usage > * {
  display: block;
  height: 100%;
  background: #26a0da;
}

.usage.full > * {
  background: #da2626;
}

.scrollbar {
  display: flex;
  flex: none;
  flex-direction: column;
  align-items: center;
  width: 15px;
  background: #f0f0f0;
}

.scrollbar svg {
  width: 9px;
  height: 9px;
  margin: 4px 0;
}

.thumb {
  width: 15px;
  height: 28px;
  margin-bottom: auto;
  background: #cdcdcd;
}

.tabs {
  display: flex;
  flex: none;
  height: 26px;
  border: 1px solid #a0a0a0;
  border-width: 1px 0;
  border-bottom-color: #d7d7d7;
}

.tab {
  gap: 2px;
  padding: 0 7px 2px 4px;
  background: #fff;
}

.newtab {
  justify-content: center;
  width: 18px;
  background: #d9d9d9;
  border: 1px solid #a0a0a0;
  border-width: 0 1px 0 2px;
}

.status {
  display: flex;
  flex: none;
  height: 21px;
}

.cell {
  display: flex;
  align-items: center;
  padding: 3px 2px 0 2px;
}

.cell + .cell {
  border-left: 1px solid #d7d7d7;
  padding-left: 3px;
}

.counts .cell {
  gap: 5px;
  padding: 2px 6px 0 3px;
}

.counts .cell + .cell {
  padding: 2px 5px 0;
}

.hidden-files {
  color: #f00;
  font-weight: bold;
}

.counts .lock {
  margin-left: auto;
}

.counts .lock.cell {
  padding: 2px 3px 0;
}

.counts .disk.cell {
  gap: 4px;
  padding-right: 3px;
}

.disk .usage {
  width: 49px;
}
```
